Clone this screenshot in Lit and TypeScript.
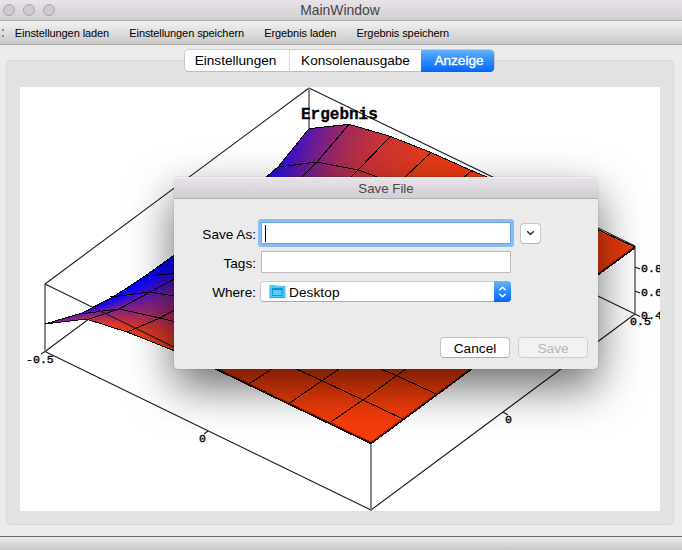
import { LitElement, html, css, svg } from "lit";
import { customElement } from "lit/decorators.js";

const sans = css`"Liberation Sans", Arial, sans-serif`;

/** Silhouette of the left-hand part of the surface: x, upper y, lower y. */
const profile: [number, number, number][] = [
  [45, 324, 324],
  [82, 313, 319],
  [113, 297, 327],
  [145, 276, 338],
  [180, 251, 353],
];

function edgeAt(x: number, side: 1 | 2): number {
  for (let i = 1; i < profile.length; i++) {
    const a = profile[i - 1];
    const b = profile[i];
    if (x <= b[0]) return a[side] + ((x - a[0]) / (b[0] - a[0])) * (b[side] - a[side]);
  }
  return profile[profile.length - 1][side];
}

@customElement("surface-plot")
class SurfacePlot extends LitElement {
  static styles = css`
    :host { display: block; width: 640px; height: 424px; background: #fff; }
    svg { display: block; }
    .box { fill: none; stroke: #1c1c1c; stroke-width: 1.1; }
    .post { fill: none; stroke: #7d7d7d; stroke-width: 1.8; }
    .mesh { fill: none; stroke: #000; stroke-width: 1; shape-rendering: crispEdges; }
    .rim { fill: none; stroke: #1a0400; stroke-width: 2.4; shape-rendering: crispEdges; }
    .rimglow { fill: none; stroke: #a82400; stroke-width: 1; shape-rendering: crispEdges; }
    .slice { shape-rendering: crispEdges; }
    .title { font: bold 16px "Liberation Mono", "Courier New", monospace; stroke: #000; stroke-width: 0.3; }
    .tick { font: 11.6px "Liberation Mono", "Courier New", monospace; stroke: #000; stroke-width: 0.35; }
  `;

  render() {
    const slices = [];
    for (let x = 45; x < 177; x += 2) {
      const top = edgeAt(x + 1, 1) - 1;
      const bottom = edgeAt(x + 1, 2) + 1;
      slices.push(svg`<rect class="slice" x=${x} y=${top} width="2" height=${bottom - top} fill="url(#height)"></rect>`);
    }
    return html`
      <svg width="640" height="424" viewBox="20 87 640 424">
        <defs>
          <linearGradient id="height" x1="0" y1="0" x2="0" y2="1">
            <stop offset="0" stop-color="#0000ff"></stop>
            <stop offset="0.16" stop-color="#1c06ee"></stop>
            <stop offset="0.4" stop-color="#701d98"></stop>
            <stop offset="0.64" stop-color="#a82a5a"></stop>
            <stop offset="0.85" stop-color="#d8362a"></stop>
            <stop offset="1" stop-color="#ee3c18"></stop>
          </linearGradient>
          <linearGradient id="tip" gradientUnits="userSpaceOnUse" x1="45" y1="0" x2="105" y2="0">
            <stop offset="0" stop-color="#7a2090"></stop>
            <stop offset="0.35" stop-color="#7a2090" stop-opacity="0.8"></stop>
            <stop offset="1" stop-color="#7a2090" stop-opacity="0"></stop>
          </linearGradient>
          <linearGradient id="back" gradientUnits="userSpaceOnUse" x1="272" y1="150" x2="440" y2="208">
            <stop offset="0" stop-color="#1c04f0"></stop>
            <stop offset="0.1" stop-color="#3c10cc"></stop>
            <stop offset="0.22" stop-color="#6e1c94"></stop>
            <stop offset="0.36" stop-color="#a02a5c"></stop>
            <stop offset="0.55" stop-color="#c83236"></stop>
            <stop offset="0.8" stop-color="#e23a1c"></stop>
            <stop offset="1" stop-color="#ea3a12"></stop>
          </linearGradient>
          <clipPath id="left">
            <path d="M45 324 82 313 113 297 145 276 180 251V353L127 332 86 319Z"></path>
          </clipPath>
        </defs>

        <path class="box" d="M309 88 45 284M309 88 635 246M45 351.5 371 510 635 314M45 351.5 309 156M635 314 309 156"></path>
        <path class="post" d="M309 88V130M45 284V351.5M635 246V314M371 443V510"></path>

        <path d="M264 179 278 167 309 128.7 349 124.3 390 136.3 431 152.5 470 170 492 179V200H264Z" fill="url(#back)"></path>
        <path class="mesh" d="M264 179 278 167 309 128.7 349 124.3 390 136.3 431 152.5 470 170 492 179M278 167 317 162 358 170 380 178M349 124.3 317 162 301 178M390.5 136.3 358 170 350 178M431 152.5 404 178M472 170.5 463 178"></path>

        <g clip-path="url(#left)">
          ${slices}
          <rect x="45" y="290" width="75" height="40" fill="url(#tip)"></rect>
        </g>
        <path class="mesh" d="M45 324 82 313 113 297 145 276 180 251M45 324 86 319 127 332 180 353M80 314 119 309 160 318 180 323M110 297 150 292 180 297M145 276 180 273M86 320 119 309 150 292 180 276M127 332 160 318 180 307"></path>
        <path class="box" d="M45 284 180 350"></path>

        <path d="M200 361 371 443 475 366V355H200Z" fill="#f63d0a"></path>
        <path class="rim" d="M200 361 371 443 475 366"></path>
        <path class="rimglow" d="M200 360 371 442 475 365"></path>
        <path class="mesh" d="M249.3 383.7 275 367M290 402.7 342 367M330.7 422 363 400 396.7 375.7 409 367M292 367 322 380.7 363 400 403 419M376 367 396.7 375.7 435.7 393.7"></path>

        <path d="M590 226 635 247 590 281Z" fill="#ea3a0c"></path>
        <path class="mesh" d="M590 226 635 247"></path>
        <path class="rim" d="M635 247 590 280"></path>
        <path class="rimglow" d="M633 247.5 590 279"></path>

        <path class="box" d="M45 351.5 41 354M208 431 204 434M503 412 508 415M635 314 640 316.5M635 291 640 293M635 267 640 269"></path>

        <text class="title" x="301" y="119">Ergebnis</text>
        <text class="tick" x="26" y="363">-0.5</text>
        <text class="tick" x="199" y="442">0</text>
        <text class="tick" x="505" y="423">0</text>
        <text class="tick" x="630" y="325">0.5</text>
        <text class="tick" x="641" y="272">0.8</text>
        <text class="tick" x="641" y="296">0.6</text>
        <text class="tick" x="641" y="319">0.4</text>
      </svg>
    `;
  }
}

@customElement("save-dialog")
class SaveDialog extends LitElement {
  static styles = css`
    :host {
      display: flex; flex-direction: column; box-sizing: border-box;
      width: 424px; height: 192px; border-radius: 5px 5px 4px 4px;
      background: #ebebeb; color: #000; font: 13.6px/20px ${sans};
      box-shadow: 0 0 1px rgba(0, 0, 0, 0.5), 0 18px 45px rgba(0, 0, 0, 0.58);
    }
    .title {
      box-sizing: border-box; height: 22px; line-height: 24px; text-align: center;
      color: #4b474b; font-size: 13.3px; border-bottom: 1px solid #b3aeb3;
      border-radius: 5px 5px 0 0;
      background: linear-gradient(#e9e4e9, #d2cdd2); box-shadow: inset 0 1px #f4f1f4;
    }
    .form {
      display: grid; grid-template-columns: 82px 250px 22px; column-gap: 5px;
      row-gap: 7px; grid-auto-rows: 22px; padding-top: 23px; align-items: center;
    }
    .label { text-align: right; white-space: nowrap; padding-top: 3px; }
    .field { box-sizing: border-box; height: 22px; background: #fff; border: 1px solid #bcbcbc; }
    .focus { border-color: #67a3e2; box-shadow: 0 0 0 3px #87bcf5; border-radius: 1px; padding: 2px 0 0 3px; }
    .caret { width: 1px; height: 17px; background: #000; }
    .more {
      display: flex; align-items: center; justify-content: center; box-sizing: border-box;
      width: 21px; height: 21px; margin-left: 4px; background: #fff; border: 1px solid #c6c6c6;
      border-bottom-color: #b0b0b0; border-radius: 4px;
    }
    .select {
      box-sizing: border-box; height: 21px; display: flex; align-items: center; background: #fff;
      border: 1px solid #c8c8c8; border-bottom-color: #aaa; border-radius: 4px; padding-left: 8px;
      margin: 1px 0 0 -1px;
    }
    .value { flex: 1; padding: 2px 0 0 3px; letter-spacing: 0.1px; }
    .stepper {
      display: flex; align-items: center; justify-content: center; width: 17px; height: 21px;
      margin-right: -1px; border-radius: 0 4px 4px 0;
      background: linear-gradient(#6cb3fa, #2e90fd 45%, #0a6bff 95%, #2a50f0);
    }
    .actions { display: flex; justify-content: flex-end; gap: 8px; padding: 35px 10px 0 0; }
    .button {
      box-sizing: border-box; width: 70px; height: 21px; line-height: 22px; text-align: center;
      background: #fff; border: 1px solid #c2c2c2; border-bottom-color: #a9a9a9; border-radius: 4px;
      font-size: 13.7px;
    }
    .off { background: #f2f2f2; color: #b7b7b7; border-color: #cfcfcf; }
  `;

  render() {
    return html`
      <div class="title">Save File</div>
      <div class="form">
        <div class="label">Save As:</div>
        <div class="field focus"><div class="caret"></div></div>
        <div class="more">
          <svg width="9" height="6" viewBox="0 0 9 6"><path d="M1.2 1.2 4.5 4.4 7.8 1.2" fill="none" stroke="#3a3a3a" stroke-width="1.5"></path></svg>
        </div>
        <div class="label">Tags:</div>
        <div class="field"></div>
        <div></div>
        <div class="label">Where:</div>
        <div class="select">
          <svg width="17" height="15" viewBox="0 0 17 15">
            <path d="M0.5 14V1.5Q0.5 0.8 1.2 0.8H5.5Q6.5 0.8 7 1.8H16.3V14Z" fill="#5cc8f0"></path>
            <path d="M0.5 3.4H16.3V14H0.5Z" fill="#46c6fa"></path>
            <path d="M0.5 13.6H16.3" stroke="#2aa6dc" stroke-width="0.9"></path>
            <rect x="3.5" y="4.5" width="9.6" height="7" fill="#4fd0ff" stroke="#0e9ade"></rect>
            <path d="M3 5.3H13.6" stroke="#0e8fd4" stroke-width="1.4"></path>
          </svg>
          <span class="value">Desktop</span>
          <div class="stepper">
            <svg width="9" height="12" viewBox="0 0 9 12"><path d="M1.2 4.2 4.5 1.2 7.8 4.2M1.2 7.8 4.5 10.8 7.8 7.8" fill="none" stroke="#fff" stroke-width="1.4"></path></svg>
          </div>
        </div>
      </div>
      <div class="actions">
        <div class="button">Cancel</div>
        <div class="button off">Save</div>
      </div>
    `;
  }
}

@customElement("app-root")
class AppRoot extends LitElement {
  static styles = css`
    :host {
      display: flex; flex-direction: column; position: relative; box-sizing: border-box;
      width: 682px; height: 550px; overflow: hidden; background: #ececec; color: #000;
      font-family: ${sans};
    }
    .titlebar {
      box-sizing: border-box; height: 21px; display: grid; grid-template-columns: 60px 1fr 60px;
      align-items: center; border-bottom: 1px solid #adadad; padding-left: 3px;
      background: linear-gradient(#e8e3e8, #d1d0d1);
    }
    .lights { display: flex; gap: 8px; }
    .light { box-sizing: border-box; width: 12px; height: 12px; border-radius: 50%; background: #cdcbcd; border: 1px solid #a9a7a9; }
    .name { font-size: 13.9px; line-height: 20px; text-align: center; color: #464446; padding-right: 5px; }
    .toolbar {
      box-sizing: border-box; height: 24px; display: flex; align-items: center; gap: 20.2px;
      background: linear-gradient(#f2f2f2, #c9c9c9); border-bottom: 1px solid #aaa;
      font-size: 11px; line-height: 14px; padding: 1px 0 0 2px; white-space: nowrap; letter-spacing: -0.09px;
    }
    .grip { display: grid; gap: 4px; width: 2px; margin: 0 -9.4px 1px 0; }
    .dot { width: 2px; height: 2px; background: #8e8e8e; }
    .main { flex: 1; display: flex; flex-direction: column; padding: 5px 0 0 6px; }
    .tabs {
      display: grid; grid-template-columns: 104px 132px 73px; width: 309px; height: 21px; z-index: 1;
      margin-left: 179px; border-radius: 4px; font-size: 13.6px; line-height: 22px; text-align: center;
      background: #fff; box-shadow: 0 0 0 0.8px #c0c0c0, 0 1px 0 #b0b0b0;
    }
    .tab { white-space: nowrap; padding-right: 3px; }
    .split { border-left: 1px solid #d8d8d8; padding-right: 0; }
    .active {
      color: #fff; border-radius: 0 4px 4px 0; -webkit-text-stroke: 0.35px #fff; padding: 0 0 0 3px;
      background: linear-gradient(#66b0fa, #2c8efd 45%, #0a6cff 92%, #2050f0);
    }
    .panel {
      box-sizing: border-box; width: 668px; height: 465px; margin-top: -11px; padding: 26px 0 0 13px;
      border: 1px solid #d9d9d9; border-radius: 4px; background: #e2e2e2;
    }
    .status { box-sizing: border-box; height: 14px; border-top: 1px solid #686868; background: linear-gradient(#ebebeb, #c8c8c8); }
    .dialog { position: absolute; left: 174px; top: 177px; z-index: 2; }
  `;

  render() {
    const actions = ["Einstellungen laden", "Einstellungen speichern", "Ergebnis laden", "Ergebnis speichern"];
    return html`
      <div class="titlebar">
        <div class="lights"><i class="light"></i><i class="light"></i><i class="light"></i></div>
        <div class="name">MainWindow</div>
      </div>
      <div class="toolbar">
        <div class="grip"><i class="dot"></i><i class="dot"></i></div>
        ${actions.map((a) => html`<span>${a}</span>`)}
      </div>
      <div class="main">
        <div class="tabs">
          <div class="tab">Einstellungen</div>
          <div class="tab split">Konsolenausgabe</div>
          <div class="tab active">Anzeige</div>
        </div>
        <div class="panel"><surface-plot></surface-plot></div>
      </div>
      <div class="status"></div>
      <save-dialog class="dialog"></save-dialog>
    `;
  }
}
